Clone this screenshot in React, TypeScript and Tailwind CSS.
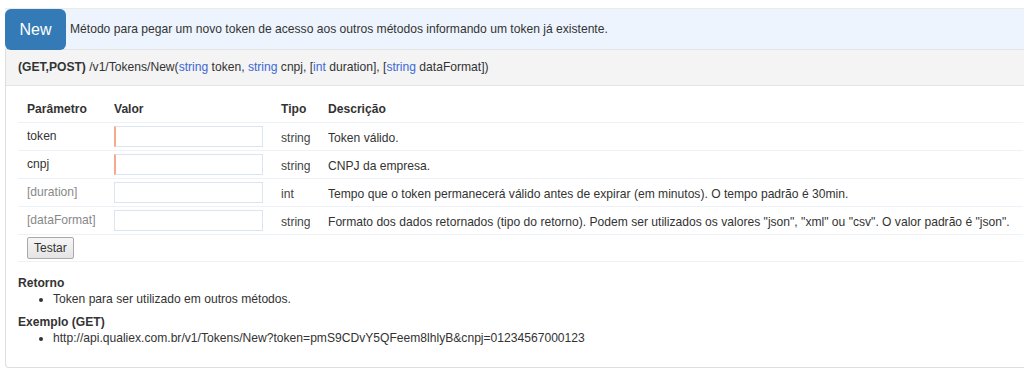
import React from 'react';

const params = [
  { name: 'token', optional: false, type: 'string', desc: 'Token válido.' },
  { name: 'cnpj', optional: false, type: 'string', desc: 'CNPJ da empresa.' },
  {
    name: '[duration]',
    optional: true,
    type: 'int',
    desc: 'Tempo que o token permanecerá válido antes de expirar (em minutos). O tempo padrão é 30min.',
  },
  {
    name: '[dataFormat]',
    optional: true,
    type: 'string',
    desc: 'Formato dos dados retornados (tipo do retorno). Podem ser utilizados os valores "json", "xml" ou "csv". O valor padrão é "json".',
  },
];

const App: React.FC = () => {
  return (
    <div className="w-[1024px] h-[373px] overflow-hidden bg-white pt-[8px] pl-[5px] text-[12.1px] text-[#333] font-['Liberation_Sans',Arial,sans-serif]">
      {/* Header */}
      <div className="flex h-[42px] bg-[#edf4fd] border-t border-[#ebebeb] w-[1030px]">
        <div className="w-[61px] h-[41px] bg-[#337ab7] rounded-[6px] flex items-center justify-center text-white text-[16px] relative z-10">
          New
        </div>
        <div className="flex items-center pl-[4px] text-[#333]">
          Método para pegar um novo token de acesso aos outros métodos informando um token já existente.
        </div>
      </div>

      {/* Panel */}
      <div className="w-[1030px] border-l border-b border-[#dedede] rounded-bl-[4px] -mt-[1px]">
        <div className="h-[37px] flex items-center px-[12px] bg-[#f4f4f4] border-t border-b border-[#e3e3e3]">
          <span className="font-bold">(GET,POST)</span>
          <span>&nbsp;/v1/Tokens/New(</span>
          <span className="text-[#3d67d4]">string</span>
          <span>&nbsp;token,&nbsp;</span>
          <span className="text-[#3d67d4]">string</span>
          <span>&nbsp;cnpj, [</span>
          <span className="text-[#3d67d4]">int</span>
          <span>&nbsp;duration], [</span>
          <span className="text-[#3d67d4]">string</span>
          <span>&nbsp;dataFormat])</span>
        </div>

        <div className="px-[12px] pt-[10px] pb-[21px]">
          {/* Table */}
          <div className="grid grid-cols-[87px_167px_47px_1fr]">
            <div className="h-[26px] flex items-center px-[9px] font-bold">Parâmetro</div>
            <div className="h-[26px] flex items-center px-[9px] font-bold">Valor</div>
            <div className="h-[26px] flex items-center px-[9px] font-bold">Tipo</div>
            <div className="h-[26px] flex items-center px-[9px] font-bold">Descrição</div>
            {params.map((p) => (
              <React.Fragment key={p.name}>
                <div
                  className={`h-[28px] border-t border-[#eef2f8] px-[9px] pt-[4px] ${
                    p.optional ? 'text-[#888]' : 'text-[#333]'
                  }`}
                >
                  {p.name}
                </div>
                <div className="h-[28px] border-t border-[#eef2f8] px-[9px] flex items-center">
                  <input
                    type="text"
                    className={`w-[149px] h-[21px] bg-white border border-[#dbe5f1] outline-none ${
                      p.optional ? '' : 'border-l-2 border-l-[#f7a98b]'
                    }`}
                  />
                </div>
                <div className="h-[28px] border-t border-[#eef2f8] px-[9px] flex items-center pt-[3px] text-[#444]">
                  {p.type}
                </div>
                <div className="h-[28px] border-t border-[#eef2f8] px-[9px] flex items-center pt-[3px] whitespace-nowrap">
                  {p.desc}
                </div>
              </React.Fragment>
            ))}
            <div className="col-span-4 h-[28px] border-t border-b border-[#eef2f8] px-[9px] flex items-center">
              <button className="h-[22px] px-[6px] bg-gradient-to-b from-[#f6f6f6] to-[#e4e4e4] border border-[#a9a9a9] rounded-[2px] text-[12px] text-[#333]">
                Testar
              </button>
            </div>
          </div>

          {/* Retorno */}
          <div className="mt-[14px] font-bold leading-[15px]">Retorno</div>
          <ul className="list-disc pl-[35px] leading-[16px] text-[#333]">
            <li>Token para ser utilizado em outros métodos.</li>
          </ul>
          <div className="mt-[8px] font-bold leading-[15px]">Exemplo (GET)</div>
          <ul className="list-disc pl-[35px] leading-[16px] text-[#333]">
            <li>http://api.qualiex.com.br/v1/Tokens/New?token=pmS9CDvY5QFeem8lhlyB&amp;cnpj=01234567000123</li>
          </ul>
        </div>
      </div>
    </div>
  );
};

export default App;
